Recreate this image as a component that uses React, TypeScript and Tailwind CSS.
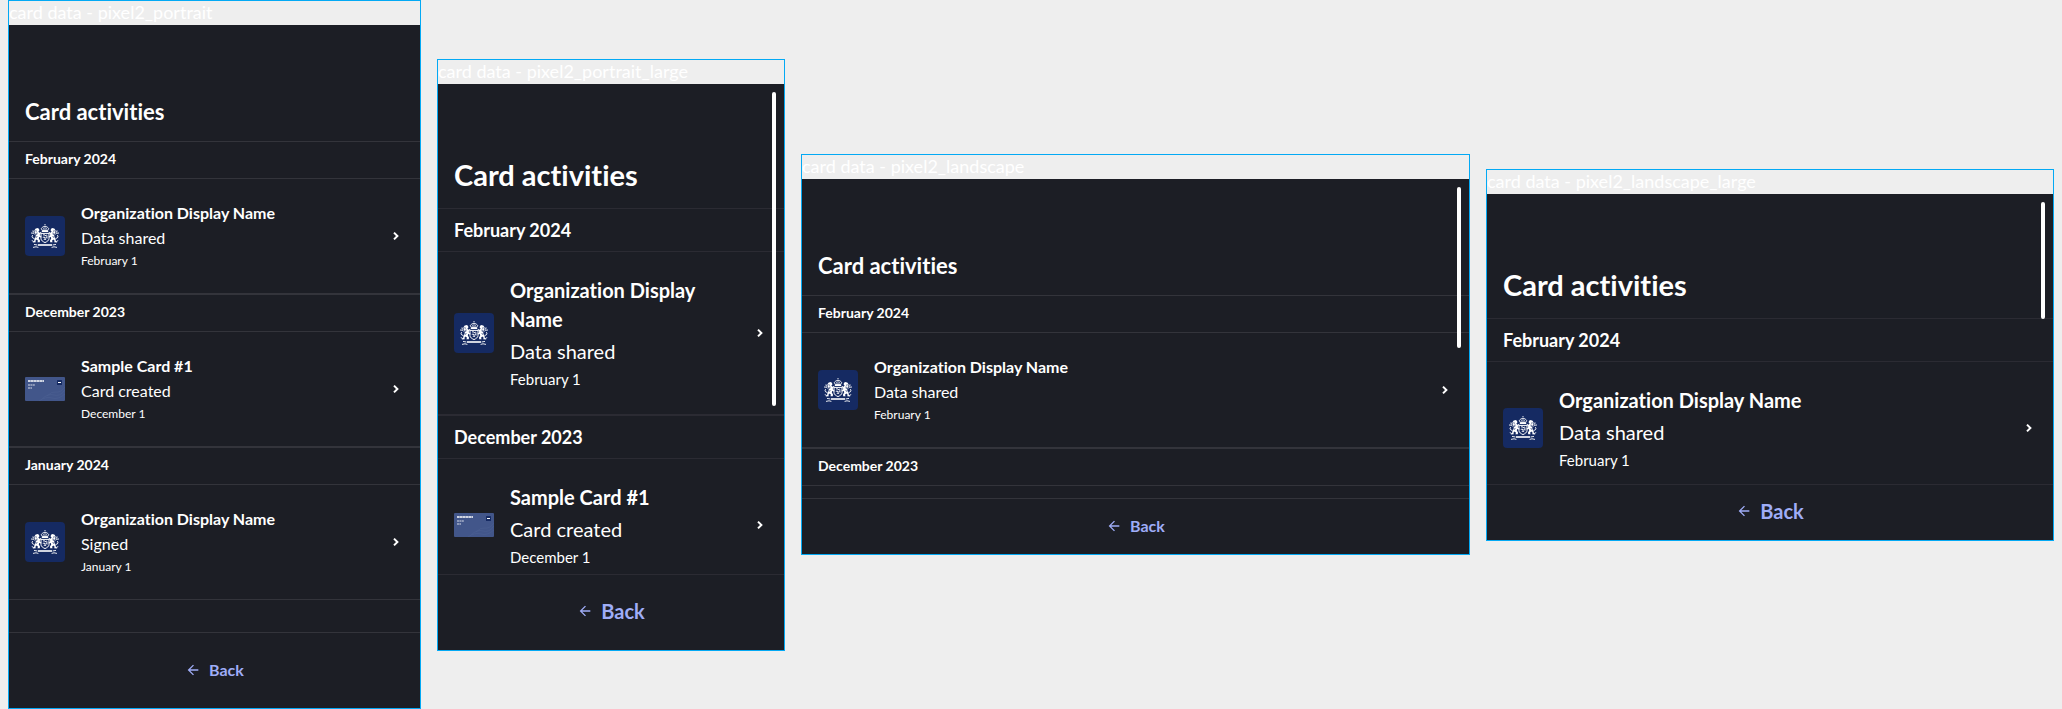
type Kind = 'organization' | 'card';

interface Activity {
  title: string;
  status: string;
  date: string;
  kind: Kind;
}

interface Month {
  label: string;
  activity?: Activity;
}

const february: Month = {
  label: 'February 2024',
  activity: {
    title: 'Organization Display Name',
    status: 'Data shared',
    date: 'February 1',
    kind: 'organization',
  },
};

const december: Month = {
  label: 'December 2023',
  activity: {
    title: 'Sample Card #1',
    status: 'Card created',
    date: 'December 1',
    kind: 'card',
  },
};

const january: Month = {
  label: 'January 2024',
  activity: {
    title: 'Organization Display Name',
    status: 'Signed',
    date: 'January 1',
    kind: 'organization',
  },
};

const normalText = {
  line: 'border-[#33343b]',
  title: 'text-[22px] leading-8',
  month: 'text-sm leading-5 pt-[7px] pb-[9px]',
  row: 'py-[22px]',
  name: 'text-base leading-6',
  status: 'text-base leading-[26px]',
  date: 'text-xs leading-5',
  back: 'text-base',
};

const largeText = {
  line: 'border-[#2b2b33]',
  title: 'text-[29px] leading-10',
  month: 'text-lg leading-[26px] py-2',
  row: 'py-6',
  name: 'text-xl leading-[29px]',
  status: 'text-xl leading-[34px]',
  date: 'text-[15px] leading-[22px]',
  back: 'text-xl',
};

function Lion() {
  return (
    <g>
      <path d="M9.4 14.6l1-1.8 2-.8 1.6.8.4 1.6-1 1 1 1.4 1.4-.8.6.8-1.6 1.6.2 1.4 1.4.6-.4 1-1.8-.4-.4 1.6 1.2 1.8-.2 1.8h-2.4l.6-1.4-1.4-1.2-1.2 1.2.4 1.4-3 .2.4-1.2 1-.4.2-2.2 1.2-1.8.2-2.2-.8-1.6z" />
      <path
        d="M6 17l2.2.2 1.4 1M8 14.4l.2 1.6 1.2.6M9 22.4c-2.2-.2-2.6-2.6-1-3.4M6.8 24.6l1.4.6"
        fill="none"
        stroke="white"
        strokeWidth=".9"
      />
      <path d="M10.4 14.8l1.4.4M12 16.6l-.4 2.2M10.8 21.4l1.6-.8" fill="none" stroke="#152a62" strokeWidth=".8" />
    </g>
  );
}

function Emblem() {
  return (
    <span className="flex size-10 shrink-0 rounded bg-[#152a62]">
      <svg viewBox="0 0 40 40" className="size-10" fill="white" aria-hidden="true">
        <rect x="19" y="8" width="2" height="1.2" fillOpacity=".45" />
        <path
          d="M17.4 14.4l-1.2-1.8 1.6-1.6 2.2-.8 2.2.8 1.6 1.6-1.2 1.8z"
          fill="none"
          stroke="white"
          strokeWidth=".9"
        />
        <path d="M20 10.4v3.4M18.4 12.2l.4 1.4M21.6 12.2l-.4 1.4" stroke="white" strokeWidth=".7" />
        <path d="M16.8 14.4h6.4v1.6h-6.4z" />
        <path d="M16 17.4h8v5.2c0 1.8-1.8 3-4 4-2.2-1-4-2.2-4-4z" fill="none" stroke="white" strokeWidth="1" />
        <path
          d="M18 19l1.4-.4.6 1.2 1.6-.8M17.8 21.4l1.6-.4.4 1.4 1.8-1M18.8 24l1-1 1.4.8M21.8 19.2l.2 3.4"
          fill="none"
          stroke="white"
          strokeWidth=".9"
        />
        <Lion />
        <g transform="matrix(-1 0 0 1 40 0)">
          <Lion />
        </g>
        <path d="M13 28.2h14v1.6H13z" />
        <path
          d="M9 28.4l3.4.6M8 31.4l3-.6 2.4.6M31 28.4l-3.4.6M32 31.4l-3-.6-2.4.6"
          fill="none"
          stroke="white"
          strokeWidth=".9"
        />
      </svg>
    </span>
  );
}

function CardThumbnail() {
  return (
    <svg viewBox="0 0 40 24" className="h-6 w-10 shrink-0" aria-hidden="true">
      <rect width="40" height="24" rx="1" fill="#42568a" />
      <path
        d="M14 24q7-5 13-3t13-4M17 22q6-6 12-4t11-5M22 19q5-5 9-4t9-5"
        fill="none"
        stroke="#4c6092"
        strokeWidth=".6"
      />
      <path d="M3 4h16" stroke="white" strokeWidth="1.6" strokeDasharray="2.6 .3" />
      <path d="M3 8h7M3 11h4" stroke="white" strokeOpacity=".8" strokeWidth="1" strokeDasharray="2 .4" />
      <rect x="32" y="3" width="5" height="5" rx=".6" fill="#152a62" />
      <path d="M33 5.5h3" stroke="white" strokeWidth="1" />
    </svg>
  );
}

function Chevron() {
  return (
    <svg viewBox="0 0 16 16" className="size-4 shrink-0" fill="none" aria-hidden="true">
      <path d="M6 4.6L9.4 8 6 11.4" stroke="white" strokeWidth="2" />
    </svg>
  );
}

function BackArrow() {
  return (
    <svg viewBox="0 0 24 24" className="size-4" fill="currentColor" aria-hidden="true">
      <path d="M20 11H7.83l5.59-5.59L12 4l-8 8 8 8 1.41-1.41L7.83 13H20v-2z" />
    </svg>
  );
}

interface ScreenProps {
  name: string;
  months: Month[];
  large?: boolean;
  landscape?: boolean;
  viewport?: string;
  thumb?: string;
}

function Screen({ name, months, large = false, landscape = false, viewport = '', thumb }: ScreenProps) {
  const type = large ? largeText : normalText;
  return (
    <section className="min-w-0 border border-[#03a9f4]">
      <p className="text-lg leading-[22px] pb-0.5 whitespace-nowrap text-white">card data - {name}</p>
      <div className="bg-[#1c1e25] text-white">
        <div className={`relative overflow-hidden ${viewport}`}>
          <header className="px-4 pt-[71px] pb-[13px]">
            <h1 className={`font-bold ${type.title}`}>Card activities</h1>
          </header>
          {months.map(({ label, activity }) => (
            <section key={label} className={`${type.line} ${activity ? 'border-y' : 'border-t'}`}>
              <h2 className={`border-b px-4 font-bold ${type.line} ${type.month}`}>{label}</h2>
              {activity && (
                <a href="#activity" className={`flex items-center gap-4 px-4 ${type.row}`}>
                  {activity.kind === 'organization' ? <Emblem /> : <CardThumbnail />}
                  <span className="flex min-w-0 flex-1 flex-col">
                    <span className={`font-bold ${type.name}`}>{activity.title}</span>
                    <span className={type.status}>{activity.status}</span>
                    <span className={type.date}>{activity.date}</span>
                  </span>
                  <Chevron />
                </a>
              )}
            </section>
          ))}
          {thumb && <span className={`absolute top-2 right-2 w-1 rounded-full bg-white ${thumb}`} />}
        </div>
        <footer
          className={`flex items-center justify-center border-t pb-0.5 ${type.line} ${landscape ? 'h-14' : 'h-[76px]'}`}
        >
          <button type="button" className={`flex items-center gap-2 font-bold text-[#9fadf7] ${type.back}`}>
            <BackArrow />
            Back
          </button>
        </footer>
      </div>
    </section>
  );
}

export default function App() {
  return (
    <main className="grid min-h-screen grid-cols-[413fr_348fr_669fr_568fr] items-center gap-4 bg-[#eeeeee] px-2 font-['Lato','Noto_Sans',sans-serif] [font-variant-ligatures:none]">
      <Screen name="pixel2_portrait" months={[february, december, january]} viewport="pb-8" />
      <Screen
        name="pixel2_portrait_large"
        months={[february, december]}
        large
        viewport="h-[490px]"
        thumb="h-[314px]"
      />
      <Screen
        name="pixel2_landscape"
        months={[february, { label: december.label }]}
        landscape
        viewport="h-[319px]"
        thumb="h-[161px]"
      />
      <Screen
        name="pixel2_landscape_large"
        months={[february]}
        large
        landscape
        viewport="h-[290px]"
        thumb="h-[117px]"
      />
    </main>
  );
}
